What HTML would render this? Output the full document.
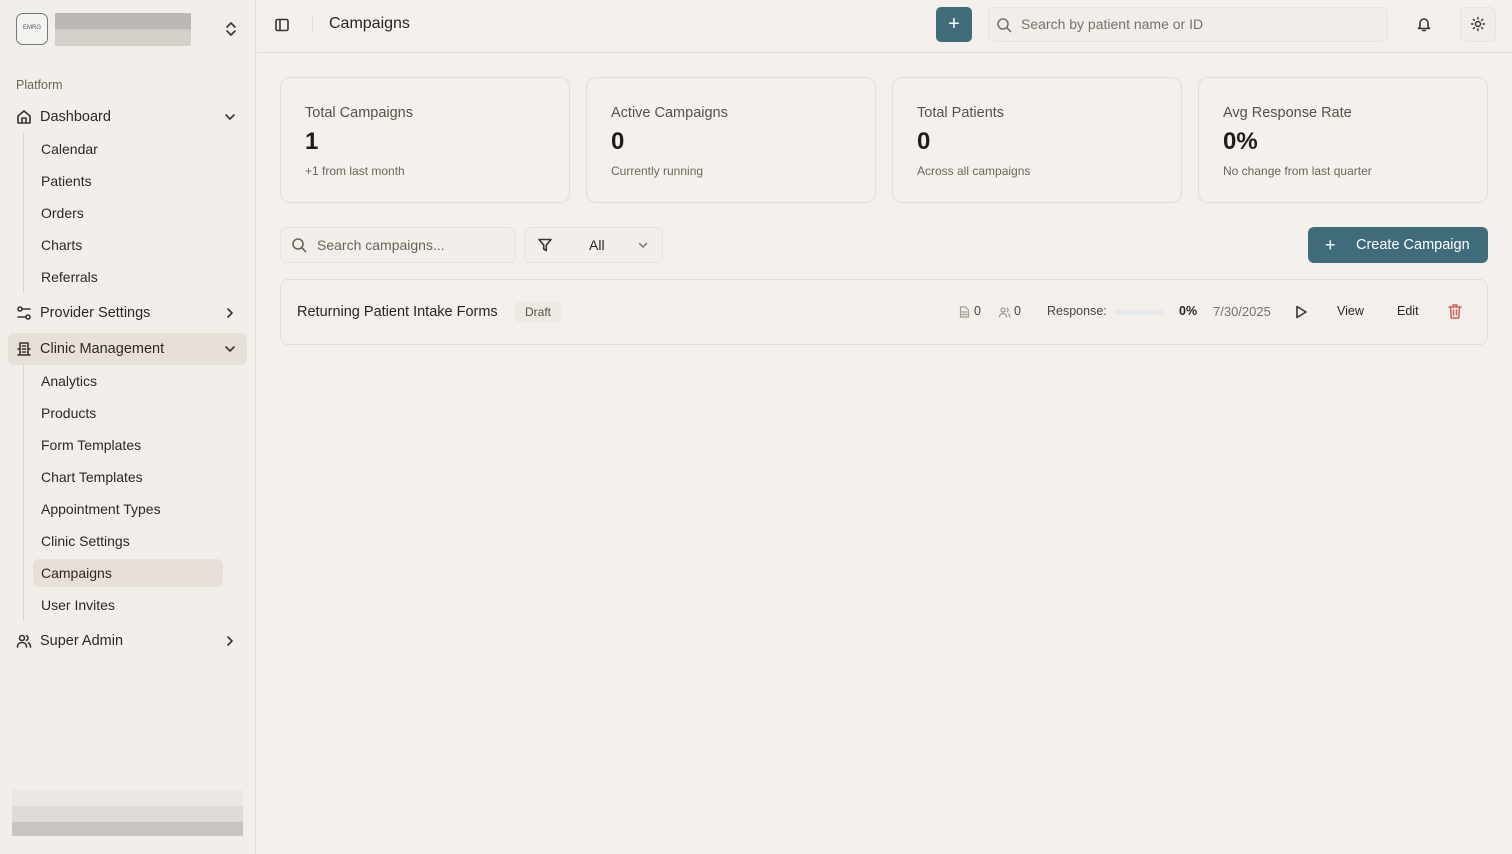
<!DOCTYPE html>
<html><head><meta charset="utf-8"><style>
*{box-sizing:border-box;margin:0;padding:0}
body{width:1512px;height:854px;overflow:hidden;background:#f4f1ec;font-family:"Liberation Sans",sans-serif;color:#2b2522;position:relative}
.sb{position:absolute;left:0;top:0;width:256px;height:854px;background:#f2eee9;border-right:1px solid #e4dfd9}
.abs{position:absolute}
.nav{position:absolute;left:40px;font-size:14.5px;color:#2e2825}
.sub{position:absolute;left:41px;font-size:14px;color:#2e2825}
.ic{position:absolute;stroke:#3a332f;fill:none;stroke-width:1.6;stroke-linecap:round;stroke-linejoin:round}
.card{position:absolute;top:77px;width:290px;height:126px;border:1px solid #e2ddd6;border-radius:10px;background:#f4f1ec}
.card .t{position:absolute;left:24px;top:27px;font-size:14.5px;color:#5a504a}
.card .v{position:absolute;left:24px;top:50px;font-size:24px;font-weight:bold;color:#221c19}
.card .s{position:absolute;left:24px;top:86px;font-size:12px;color:#6d635c}
</style></head><body>
<div class="sb">
 <div class="abs" style="left:16px;top:13px;width:32px;height:32px;border:1.5px solid #6f7a80;border-radius:7px;background:#f5f3f0;font-size:6px;color:#556;text-align:center;line-height:29px">EMRG</div>
 <div class="abs" style="left:55px;top:13px;width:136px;height:33px;background:linear-gradient(#bdb8b4 0 50%,#d6d0cb 50%)"></div>
 <svg class="ic" style="left:224px;top:21px" width="14" height="16" viewBox="0 0 14 16"><path d="M3 6l4-4 4 4M3 10l4 4 4-4"/></svg>
 <div class="abs" style="left:16px;top:78px;font-size:12.5px;color:#6d635c">Platform</div>
 <svg class="ic" style="left:16px;top:109px" width="16" height="16" viewBox="0 0 16 16"><path d="M2 7l6-5 6 5v7H2z M6 14v-5h4v5"/></svg>
 <div class="nav" style="top:109px">Dashboard</div>
 <svg class="ic" style="left:224px;top:111px" width="12" height="12" viewBox="0 0 12 12"><path d="M2 4l4 4 4-4"/></svg>
 <div class="abs" style="left:23px;top:133px;width:1px;height:160px;background:#ddd7d0"></div>
 <div class="sub" style="top:141px">Calendar</div>
 <div class="sub" style="top:173px">Patients</div>
 <div class="sub" style="top:205px">Orders</div>
 <div class="sub" style="top:237px">Charts</div>
 <div class="sub" style="top:269px">Referrals</div>
 <svg class="ic" style="left:16px;top:305px" width="16" height="16" viewBox="0 0 16 16"><circle cx="4" cy="4" r="2"/><circle cx="12" cy="12" r="2"/><path d="M6 4h8M2 12h8"/></svg>
 <div class="nav" style="top:305px">Provider Settings</div>
 <svg class="ic" style="left:224px;top:307px" width="12" height="12" viewBox="0 0 12 12"><path d="M4 2l4 4-4 4"/></svg>
 <div class="abs" style="left:8px;top:333px;width:239px;height:32px;background:#e7e0d8;border-radius:6px"></div>
 <svg class="ic" style="left:16px;top:341px" width="16" height="16" viewBox="0 0 16 16"><path d="M4 14V2h8v12M2 14h12M2 8h2M12 8h2M6.5 5h3M6.5 8h3M6.5 11h3"/></svg>
 <div class="nav" style="top:341px">Clinic Management</div>
 <svg class="ic" style="left:224px;top:343px" width="12" height="12" viewBox="0 0 12 12"><path d="M2 4l4 4 4-4"/></svg>
 <div class="abs" style="left:23px;top:365px;width:1px;height:256px;background:#ddd7d0"></div>
 <div class="sub" style="top:373px">Analytics</div>
 <div class="sub" style="top:405px">Products</div>
 <div class="sub" style="top:437px">Form Templates</div>
 <div class="sub" style="top:469px">Chart Templates</div>
 <div class="sub" style="top:501px">Appointment Types</div>
 <div class="sub" style="top:533px">Clinic Settings</div>
 <div class="abs" style="left:33px;top:559px;width:190px;height:28px;background:#e7e0d8;border-radius:6px"></div>
 <div class="sub" style="top:565px">Campaigns</div>
 <div class="sub" style="top:597px">User Invites</div>
 <svg class="ic" style="left:16px;top:633px" width="16" height="16" viewBox="0 0 16 16"><circle cx="6" cy="5" r="2.5"/><path d="M1.5 14c0-3 2-4.5 4.5-4.5s4.5 1.5 4.5 4.5M10.5 2.8a2.5 2.5 0 010 4.6M12.5 10c1.3.6 2 2 2 4"/></svg>
 <div class="nav" style="top:633px">Super Admin</div>
 <svg class="ic" style="left:224px;top:635px" width="12" height="12" viewBox="0 0 12 12"><path d="M4 2l4 4-4 4"/></svg>
 <div class="abs" style="left:12px;top:790px;width:231px;height:16px;background:#ebe8e4"></div>
 <div class="abs" style="left:12px;top:806px;width:231px;height:16px;background:#dfdbd6"></div>
 <div class="abs" style="left:12px;top:822px;width:231px;height:14px;background:#c8c4bf"></div>
</div>
<div class="abs" style="left:257px;top:52px;width:1255px;height:1px;background:#e2ddd6"></div>
<svg class="ic" style="left:274px;top:17px" width="16" height="16" viewBox="0 0 16 16"><rect x="2" y="2.5" width="12" height="11" rx="1.5"/><path d="M6 2.5v11"/></svg>
<div class="abs" style="left:312px;top:15px;width:1px;height:18px;background:#e2ddd6"></div>
<div class="abs" style="left:329px;top:15px;font-size:16px;color:#2b2522">Campaigns</div>
<div class="abs" style="left:936px;top:7px;width:36px;height:35px;background:#3f6b7b;border-radius:5px;color:#fff;font-size:20px;text-align:center;line-height:34px">+</div>
<div class="abs" style="left:988px;top:7px;width:400px;height:35px;background:#f1ede8;border:1px solid #e9e4de;border-radius:6px"></div>
<svg class="ic" style="left:996px;top:17px;stroke:#7a706a" width="16" height="16" viewBox="0 0 16 16"><circle cx="7" cy="7" r="5"/><path d="M11 11l3.5 3.5"/></svg>
<div class="abs" style="left:1021px;top:16px;font-size:14px;color:#7a706a">Search by patient name or ID</div>
<svg class="ic" style="left:1416px;top:16px" width="16" height="16" viewBox="0 0 16 16"><path d="M4 11V7a4 4 0 018 0v4l1.5 1.5h-11zM6.5 14.5h3"/></svg>
<div class="abs" style="left:1460px;top:7px;width:36px;height:35px;background:#f1ede8;border:1px solid #e9e4de;border-radius:6px"></div>
<svg class="ic" style="left:1470px;top:16px;stroke-width:1.4" width="16" height="16" viewBox="0 0 16 16"><circle cx="8" cy="8" r="2.5"/><path d="M8 1.5v1.5M8 13v1.5M1.5 8H3M13 8h1.5M3.4 3.4l1 1M11.6 11.6l1 1M3.4 12.6l1-1M11.6 4.4l1-1"/></svg>

<div class="card" style="left:280px"><div class="t">Total Campaigns</div><div class="v">1</div><div class="s">+1 from last month</div></div>
<div class="card" style="left:586px"><div class="t">Active Campaigns</div><div class="v">0</div><div class="s">Currently running</div></div>
<div class="card" style="left:892px"><div class="t">Total Patients</div><div class="v">0</div><div class="s">Across all campaigns</div></div>
<div class="card" style="left:1198px"><div class="t">Avg Response Rate</div><div class="v">0%</div><div class="s">No change from last quarter</div></div>

<div class="abs" style="left:280px;top:227px;width:236px;height:36px;border:1px solid #e7e2dc;border-radius:6px;background:#f2eee9"></div>
<svg class="ic" style="left:291px;top:237px;stroke:#6d635c" width="16" height="16" viewBox="0 0 16 16"><circle cx="7" cy="7" r="5"/><path d="M11 11l3.5 3.5"/></svg>
<div class="abs" style="left:317px;top:237px;font-size:14px;color:#6d635c">Search campaigns...</div>
<div class="abs" style="left:524px;top:227px;width:139px;height:36px;border:1px solid #e7e2dc;border-radius:6px;background:#f2eee9"></div>
<svg class="ic" style="left:537px;top:237px" width="16" height="16" viewBox="0 0 16 16"><path d="M2 2.5h12l-4.7 5.5v5.5l-2.6-1.5v-4z"/></svg>
<div class="abs" style="left:589px;top:237px;font-size:14px">All</div>
<svg class="ic" style="left:637px;top:239px;stroke:#8a807a" width="12" height="12" viewBox="0 0 12 12"><path d="M2.5 4.5l3.5 3.5 3.5-3.5"/></svg>
<div class="abs" style="left:1308px;top:227px;width:180px;height:36px;background:#3f6b7b;border-radius:6px;color:#fff;font-size:14.5px;line-height:36px;padding-left:48px">Create Campaign</div>
<div class="abs" style="left:1325px;top:235px;color:#fff;font-size:18px">+</div>

<div class="abs" style="left:280px;top:279px;width:1208px;height:66px;border:1px solid #e2ddd6;border-radius:8px;background:#f3f0eb"></div>
<div class="abs" style="left:297px;top:304px;font-size:14.5px;color:#2b2522">Returning Patient Intake Forms</div>
<div class="abs" style="left:515px;top:302px;width:46px;height:20px;background:#ece8e2;border-radius:4px;font-size:12px;color:#5a504a;text-align:center;line-height:20px">Draft</div>
<svg class="ic" style="left:959px;top:306px;stroke:#a39a93;stroke-width:1.2" width="11" height="12" viewBox="0 0 11 12"><path d="M1.5 1h5l3 3v7h-8zM3 6h5M3 8.5h5"/></svg>
<div class="abs" style="left:974px;top:304px;font-size:12.5px;color:#4a423d">0</div>
<svg class="ic" style="left:998px;top:306px;stroke:#a39a93;stroke-width:1.2" width="13" height="12" viewBox="0 0 13 12"><circle cx="5" cy="4" r="2"/><path d="M1.5 11c0-2 1.5-3.5 3.5-3.5s3.5 1.5 3.5 3.5M9 2.2a2 2 0 010 3.6M10.5 8c.8.5 1.2 1.5 1.2 3"/></svg>
<div class="abs" style="left:1014px;top:304px;font-size:12.5px;color:#4a423d">0</div>
<div class="abs" style="left:1047px;top:304px;font-size:12.5px;color:#4a423d">Response:</div>
<div class="abs" style="left:1114px;top:310px;width:50px;height:5px;background:#e6e8ec;border-radius:3px"></div>
<div class="abs" style="left:1179px;top:304px;font-size:12.5px;font-weight:bold;color:#2b2522">0%</div>
<div class="abs" style="left:1213px;top:304px;font-size:13px;color:#7a706a">7/30/2025</div>
<svg class="ic" style="left:1294px;top:304px" width="14" height="16" viewBox="0 0 14 16"><path d="M3 2.5l9 5.5-9 5.5z"/></svg>
<div class="abs" style="left:1337px;top:304px;font-size:12.5px;color:#2b2522">View</div>
<div class="abs" style="left:1397px;top:304px;font-size:12.5px;color:#2b2522">Edit</div>
<svg class="ic" style="left:1447px;top:303px;stroke:#c9605a;stroke-width:1.5" width="16" height="17" viewBox="0 0 16 17"><path d="M2 4h12M6 4V2h4v2M3.5 4l.8 11h7.4l.8-11M6.5 7v5M9.5 7v5"/></svg>
</body></html>
